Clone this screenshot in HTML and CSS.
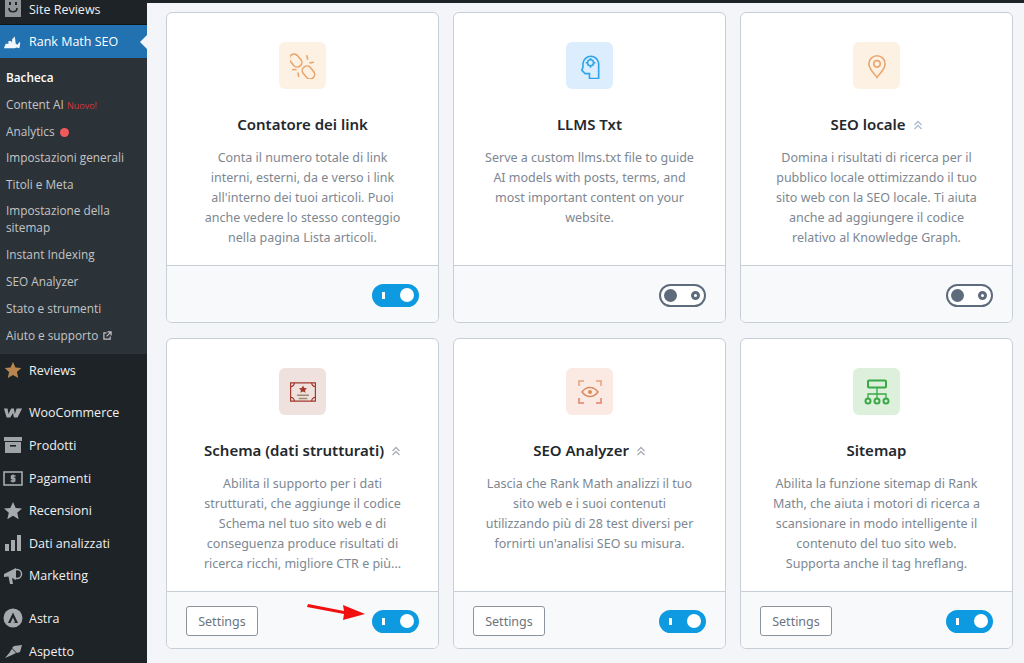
FILE: index.html
```html
<!DOCTYPE html>
<html lang="it">

<head>
    <meta charset="UTF-8">
    <title>Rank Math SEO</title>
    <link rel="stylesheet" href="styles.css">
</head>

<body>
    <nav class="sidebar">
        <a class="menu-item first">
            <svg class="menu-icon" viewBox="0 0 20 20"><path d="M3 0h14a1 1 0 0 1 1 1v17H2V1a1 1 0 0 1 1-1z" fill="#8f9499"/><path d="M6 9c0 5 8 5 8 0" fill="none" stroke="#1d2327" stroke-width="1.600"/><path d="M6 3h2v3H6zM12 3h2v3h-2z" fill="#1d2327"/></svg>
            <span>Site Reviews</span>
        </a>
        <a class="menu-item current">
            <svg class="menu-icon" viewBox="0 0 22 16"><path d="M1 15l2-5h3V7h3l1 2V5l3-3 1 8 2 1 2-3 1 1-1 6-3-1-2 1z" fill="#f0f6fc"/></svg>
            <span>Rank Math SEO</span>
        </a>
        <ul class="submenu">
            <li class="bold">Bacheca</li>
            <li>Content AI <em class="new">Nuovo!</em></li>
            <li>Analytics <i class="dot"></i></li>
            <li>Impostazioni generali</li>
            <li>Titoli e Meta</li>
            <li class="double">Impostazione della sitemap</li>
            <li>Instant Indexing</li>
            <li>SEO Analyzer</li>
            <li>Stato e strumenti</li>
            <li>Aiuto e supporto
                <svg class="ext" viewBox="0 0 10 10"><path d="M4 2H1v7h7V6M5 1h4v4M9 1L4 6" fill="none" stroke="#c3c4c7" stroke-width="1.300"/></svg>
            </li>
        </ul>
        <a class="menu-item">
            <svg class="menu-icon" viewBox="0 0 20 20"><path d="M10 2l2.500 5.500 5.800.6-4.400 3.900 1.300 5.900L10 14.900l-5.200 3 1.300-5.900-4.400-3.900 5.800-.6z" fill="#b8864e"/></svg>
            <span>Reviews</span>
        </a>
        <a class="menu-item group">
            <svg class="menu-icon" viewBox="0 0 22 12"><path d="M1 1h4l1 6 3-6h3l1 6 2-6h6l-5 10h-4l-1-5-3 5H4z" fill="#a7aaad"/></svg>
            <span>WooCommerce</span>
        </a>
        <a class="menu-item">
            <svg class="menu-icon" viewBox="0 0 20 20"><path d="M1 2h18v4H1zM2 7h16v11H2z" fill="#9ea3a8"/><path d="M7 10h6v1.600H7z" fill="#1d2327"/></svg>
            <span>Prodotti</span>
        </a>
        <a class="menu-item">
            <svg class="menu-icon" viewBox="0 0 20 20"><rect x="1" y="4" width="18" height="13" fill="none" stroke="#a7aaad" stroke-width="1.600"/><path d="M12.500 8h-4v2.500h3.200v2.500h-4M10 6.500v8" fill="none" stroke="#a7aaad" stroke-width="1.400"/></svg>
            <span>Pagamenti</span>
        </a>
        <a class="menu-item">
            <svg class="menu-icon" viewBox="0 0 20 20"><path d="M10 1l2.700 6 6.300.6-4.800 4.200 1.500 6.400L10 14.800l-5.700 3.400 1.500-6.400L1 7.600 7.300 7z" fill="#a7aaad"/></svg>
            <span>Recensioni</span>
        </a>
        <a class="menu-item">
            <svg class="menu-icon" viewBox="0 0 20 20"><path d="M2 11h4v7H2zM8 7h4v11H8zM14 2h4v16h-4z" fill="#a7aaad"/></svg>
            <span>Dati analizzati</span>
        </a>
        <a class="menu-item">
            <svg class="menu-icon" viewBox="0 0 20 20"><path d="M1 8l12-6v12L9 12l1 6H7l-1.500-7.500L1 11z" fill="#a7aaad"/><circle cx="14" cy="8" r="4.500" fill="none" stroke="#a7aaad" stroke-width="1.500"/></svg>
            <span>Marketing</span>
        </a>
        <a class="menu-item group">
            <svg class="menu-icon" viewBox="0 0 20 20"><circle cx="10" cy="10" r="9.500" fill="#a7aaad"/><path d="M10 4.500L5 15h2.500L10 9.500 12 14H9.500l3.500 1h2z" fill="#1d2327"/></svg>
            <span>Astra</span>
        </a>
        <a class="menu-item">
            <svg class="menu-icon" viewBox="0 0 20 20"><path d="M19 4l-2 7-3 1-5-5 2-2zM9 8l4 4-2 1-2 1-7 3 5-6 1-2z" fill="#a7aaad"/></svg>
            <span>Aspetto</span>
        </a>
    </nav>

    <main class="content">
        <div class="topline"></div>
        <div class="cards">
            <section class="card">
                <div class="card-body">
                    <div class="icon orange">
                        <svg viewBox="0 0 24 24" fill="none" stroke="#e9a76f" stroke-width="1.500" stroke-linecap="round"><rect x="1" y="0.500" width="8.500" height="13" rx="4.200" transform="rotate(-40 5.200 7)"/><rect x="12.800" y="11.500" width="8.500" height="13" rx="4.200" transform="rotate(-40 17 18)"/><path d="M15.500 2.500l.8 3M21.500 8.500l-3 .6M2.500 15.500l3 -.3M8 21.500l-.6-3"/></svg>
                    </div>
                    <h3>Contatore dei link</h3>
                    <p>Conta il numero totale di link interni, esterni, da e verso i link all'interno dei tuoi articoli. Puoi anche vedere lo stesso conteggio nella pagina Lista articoli.</p>
                </div>
                <div class="card-footer">
                    <span class="toggle on"></span>
                </div>
            </section>

            <section class="card">
                <div class="card-body">
                    <div class="icon blue">
                        <svg viewBox="0 0 24 24" fill="none" stroke="#2ea5ea" stroke-width="1.500"><path d="M20 23.500h-8.500V19H7.500L4.500 16l1-3V9.500a7.300 7.300 0 0 1 14.500 0z"/><circle cx="12.500" cy="9" r="2.800"/><path d="M12.500 4.500v1.700M12.500 11.800v1.700M8 9h1.700M15.300 9H17"/></svg>
                    </div>
                    <h3>LLMS Txt</h3>
                    <p>Serve a custom llms.txt file to guide AI models with posts, terms, and most important content on your website.</p>
                </div>
                <div class="card-footer">
                    <span class="toggle"></span>
                </div>
            </section>

            <section class="card">
                <div class="card-body">
                    <div class="icon orange">
                        <svg viewBox="0 0 24 24" fill="none" stroke="#e9a76f" stroke-width="1.500"><path d="M12 22.500c-1-2-7.500-7-7.500-12.500a7.500 7.500 0 0 1 15 0c0 5.500-6.500 10.500-7.500 12.500z"/><circle cx="12" cy="10" r="3"/></svg>
                    </div>
                    <h3>SEO locale <svg class="chevrons" viewBox="0 0 10 10"><path d="M1.500 5L5 1.500 8.500 5M1.500 9L5 5.500 8.500 9" fill="none" stroke="#a9bccf" stroke-width="1.300"/></svg></h3>
                    <p>Domina i risultati di ricerca per il pubblico locale ottimizzando il tuo sito web con la SEO locale. Ti aiuta anche ad aggiungere il codice relativo al Knowledge Graph.</p>
                </div>
                <div class="card-footer">
                    <span class="toggle"></span>
                </div>
            </section>

            <section class="card">
                <div class="card-body">
                    <div class="icon brown">
                        <svg viewBox="1 3 24 18" fill="none" stroke="#a5392f" stroke-width="1.200"><path d="M1.500 3.500h23v17h-23z"/><path d="M1.500 7a3.500 3.500 0 0 0 3.500-3.500M21 3.500A3.500 3.500 0 0 0 24.500 7M1.500 17A3.500 3.500 0 0 1 5 20.500M21 20.500a3.500 3.500 0 0 1 3.500-3.500"/><path d="M13 6l1.200 2.300 2.500.3-1.800 1.700.5 2.500-2.400-1.200-2.400 1.200.5-2.500-1.800-1.700 2.500-.3z" fill="#a5392f" stroke="none"/><path d="M7.500 15h11M9 18h8" stroke="#a08a70" stroke-width="1.500"/></svg>
                    </div>
                    <h3>Schema (dati strutturati) <svg class="chevrons" viewBox="0 0 10 10"><path d="M1.500 5L5 1.500 8.500 5M1.500 9L5 5.500 8.500 9" fill="none" stroke="#a9aeb4" stroke-width="1.300"/></svg></h3>
                    <p>Abilita il supporto per i dati strutturati, che aggiunge il codice Schema nel tuo sito web e di conseguenza produce risultati di ricerca ricchi, migliore CTR e più...</p>
                </div>
                <div class="card-footer">
                    <button type="button" class="settings">Settings</button>
                    <span class="toggle on"></span>
                </div>
            </section>

            <section class="card">
                <div class="card-body">
                    <div class="icon peach">
                        <svg viewBox="0 0 26 26" fill="none" stroke="#e9a078" stroke-width="1.500"><path d="M2 7V2h5M19 2h5v5"/><path d="M2 19v5h5M24 19v5h-5" stroke="#e5806a"/><path d="M5 13c4.500-6 11.500-6 16 0-4.500 6-11.500 6-16 0z" stroke="#d98a5e"/><circle cx="13" cy="13" r="2" fill="#e08a4e" stroke="none"/></svg>
                    </div>
                    <h3>SEO Analyzer <svg class="chevrons" viewBox="0 0 10 10"><path d="M1.500 5L5 1.500 8.500 5M1.500 9L5 5.500 8.500 9" fill="none" stroke="#a9aeb4" stroke-width="1.300"/></svg></h3>
                    <p>Lascia che Rank Math analizzi il tuo sito web e i suoi contenuti utilizzando più di 28 test diversi per fornirti un'analisi SEO su misura.</p>
                </div>
                <div class="card-footer">
                    <button type="button" class="settings">Settings</button>
                    <span class="toggle on"></span>
                </div>
            </section>

            <section class="card">
                <div class="card-body">
                    <div class="icon green">
                        <svg viewBox="0 0 26 26" fill="none" stroke="#3aa845" stroke-width="2"><rect x="4" y="1.500" width="18" height="7" rx="1"/><path d="M13 8.500v6.500M4 19v-4h18v4M13 15v4" stroke-width="1.300"/><circle cx="4" cy="22" r="2.500"/><circle cx="13" cy="22" r="2.500"/><circle cx="22" cy="22" r="2.500"/></svg>
                    </div>
                    <h3>Sitemap</h3>
                    <p>Abilita la funzione sitemap di Rank Math, che aiuta i motori di ricerca a scansionare in modo intelligente il contenuto del tuo sito web. Supporta anche il tag hreflang.</p>
                </div>
                <div class="card-footer">
                    <button type="button" class="settings">Settings</button>
                    <span class="toggle on"></span>
                </div>
            </section>
        </div>

        <svg class="arrow" viewBox="0 0 60 24"><path d="M1 1l36 7-1-6 22 9-22 6 1-6L0 4z" fill="#f01010"/></svg>
    </main>
</body>

</html>
```

FILE: styles.css
```css
* {
    box-sizing: border-box;
    margin: 0;
    padding: 0;
}

*::before,
*::after {
    box-sizing: border-box;
}

html,
body {
    height: 100%;
    overflow: hidden;
}

body {
    display: flex;
    background: #f3f5f8;
    font-family: "Noto Sans", "Open Sans", sans-serif;
}

/* sidebar */

.sidebar {
    width: 147px;
    height: 663px;
    flex-shrink: 0;
    overflow: hidden;
    background: #1d2327;
    color: #f0f0f1;
    font-family: "Open Sans", "Noto Sans", sans-serif;
    font-size: 12.5px;
}

.menu-item {
    display: flex;
    align-items: center;
    gap: 6px;
    height: 32.6px;
    padding-left: 3px;
}

.menu-icon {
    width: 20px;
    height: 20px;
    flex-shrink: 0;
}

.first {
    height: 25px;
    padding-bottom: 6px;
    border-bottom: 1px solid #101517;
}

.current {
    position: relative;
    height: 33px;
    background: #2271b1;
    color: #fff;
    font-weight: 500;
}

.current::after {
    content: "";
    position: absolute;
    right: 0;
    top: 10px;
    border: 7px solid transparent;
    border-right-color: #f3f5f8;
    border-left: 0;
}

.submenu {
    list-style: none;
    height: 296px;
    padding-top: 6px;
    background: #2c3338;
    color: #c3c4c7;
    font-size: 11.8px;
}

.submenu li {
    height: 26.8px;
    line-height: 26px;
    padding-left: 6px;
    white-space: nowrap;
}

.submenu .double {
    height: 43.500px;
    line-height: 17px;
    padding-top: 4px;
    white-space: normal;
}

.bold {
    color: #fff;
    font-weight: 600;
}

.new {
    font-size: 9px;
    font-style: normal;
    color: #d63638;
}

.dot {
    display: inline-block;
    width: 9px;
    height: 9px;
    margin-left: 2px;
    border-radius: 50%;
    background: #f05a5a;
    vertical-align: -1px;
}

.ext {
    width: 9px;
    height: 9px;
    margin-left: 2px;
}

.group {
    margin-top: 10px;
}

/* cards */

.content {
    position: relative;
    flex: 1;
}

.topline {
    height: 3px;
    background: #1d2327;
}

.cards {
    display: grid;
    grid-template-columns: repeat(3, 273px);
    grid-auto-rows: 311px;
    gap: 15px 14px;
    padding: 9px 0 0 19px;
}

.card {
    display: flex;
    flex-direction: column;
    overflow: hidden;
    background: #fff;
    border: 1px solid #c8ced6;
    border-radius: 6px;
}

.card-body {
    flex: 1;
    padding: 29px 30px 0;
    text-align: center;
}

.icon {
    display: grid;
    place-items: center;
    width: 47px;
    height: 47px;
    margin: 0 auto;
    border-radius: 6px;
}

.icon svg {
    width: 26px;
    height: 26px;
}

.orange {
    background: #fdf1e3;
}

.blue {
    background: #dcedfd;
}

.brown {
    background: #efe2de;
}

.peach {
    background: #fbeae3;
}

.green {
    background: #dcf0dc;
}

.card h3 {
    margin-top: 24px;
    font-size: 15px;
    font-weight: 600;
    line-height: 22px;
    color: #23282d;
}

.chevrons {
    width: 10px;
    height: 10px;
    margin-left: 3px;
}

.card p {
    margin-top: 13px;
    font-size: 12.5px;
    line-height: 20px;
    color: #7d8792;
}

.card-footer {
    display: flex;
    align-items: center;
    justify-content: space-between;
    height: 57px;
    padding: 2px 19px 0;
    background: #f7f9fb;
    border-top: 1px solid #c8ced6;
}

.settings {
    width: 72px;
    height: 30px;
    background: #fff;
    border: 1px solid #8d949c;
    border-radius: 3px;
    font-family: inherit;
    font-size: 12.5px;
    color: #6b7480;
}

.toggle {
    position: relative;
    width: 47px;
    height: 23px;
    margin-left: auto;
    border: 2px solid #5d6b7d;
    border-radius: 12px;
    background: #fff;
}

.toggle::before {
    content: "";
    position: absolute;
    left: 3px;
    top: 3px;
    width: 13px;
    height: 13px;
    border-radius: 50%;
    background: #5d6b7d;
}

.toggle::after {
    content: "";
    position: absolute;
    right: 4px;
    top: 5px;
    width: 9px;
    height: 9px;
    border: 3px solid #5d6b7d;
    border-radius: 50%;
}

.toggle.on {
    border-color: #0d9ae0;
    background: #0d9ae0;
}

.toggle.on::before {
    left: 8px;
    top: 6px;
    width: 3px;
    height: 7px;
    border-radius: 0;
    background: #fff;
}

.toggle.on::after {
    right: 3px;
    top: 2.500px;
    width: 14px;
    height: 14px;
    border: 0;
    background: #fff;
}

/* red arrow drawn on top of the screenshot */

.arrow {
    position: absolute;
    left: 160px;
    top: 603px;
    width: 60px;
    height: 24px;
}
```
